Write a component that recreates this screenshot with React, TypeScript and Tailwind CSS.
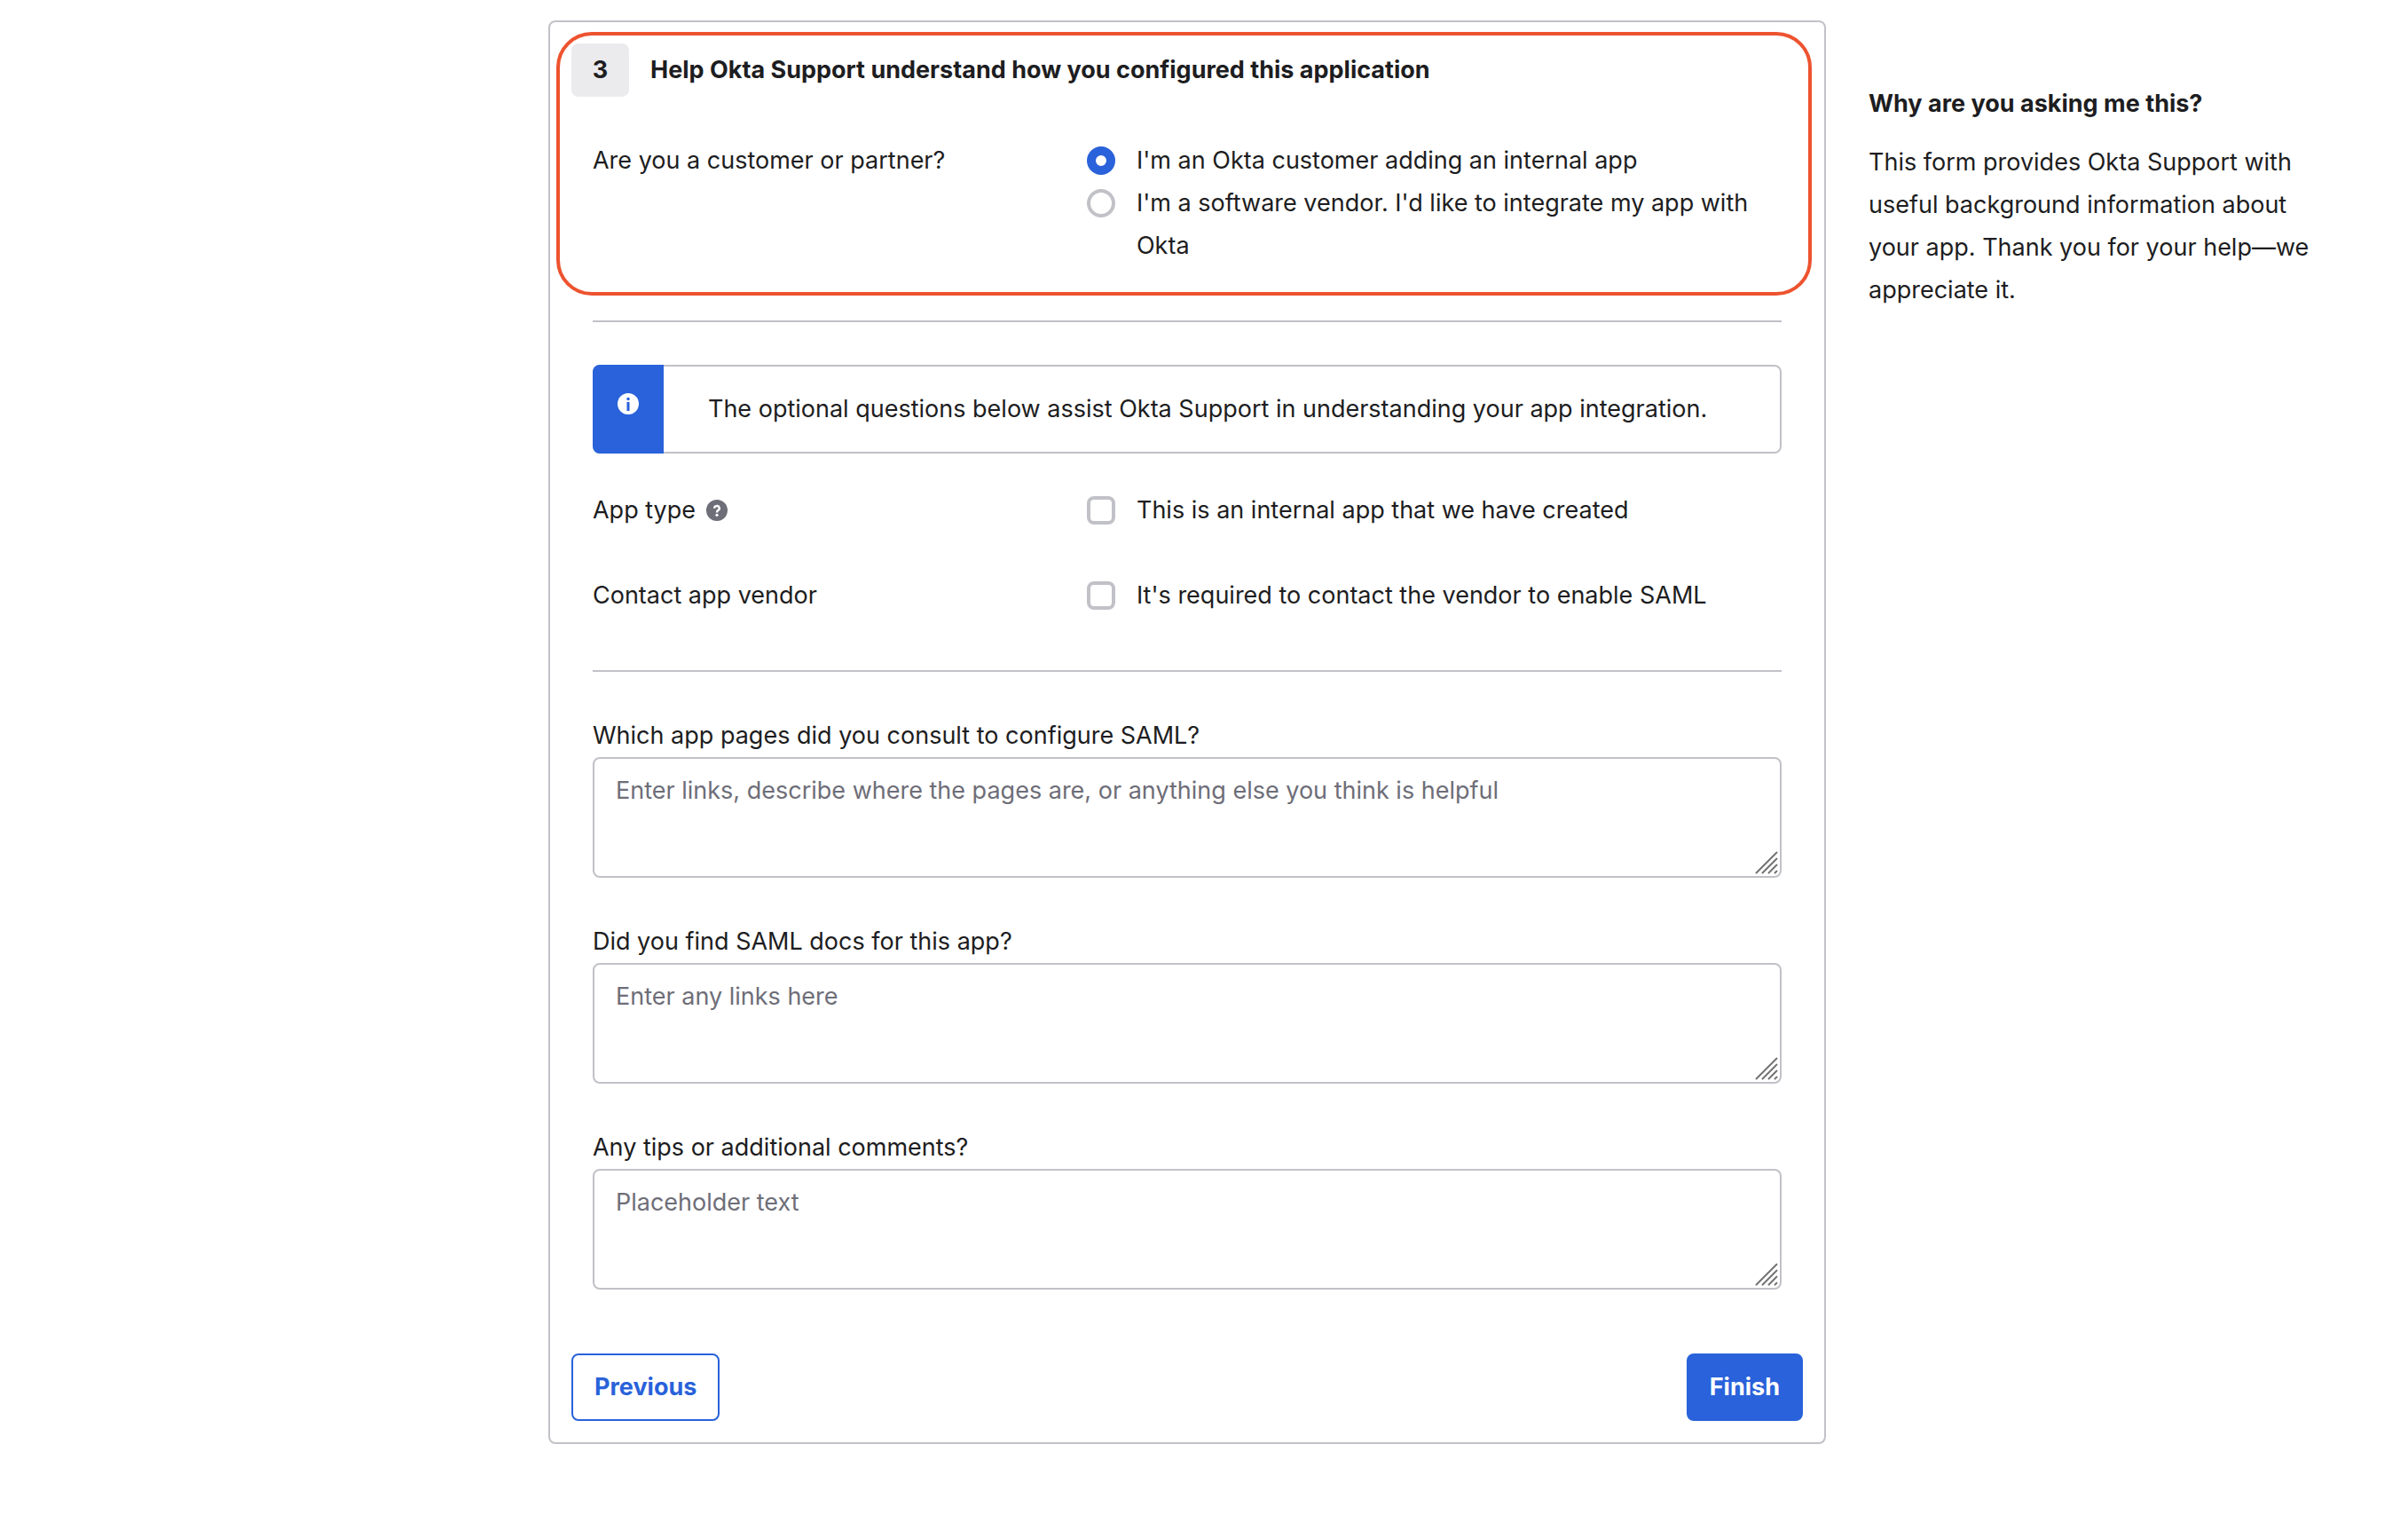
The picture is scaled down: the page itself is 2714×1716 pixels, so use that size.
import { useId } from 'react';

function InfoIcon() {
  return (
    <svg viewBox="0 0 24 24" className="size-6" aria-hidden="true">
      <circle cx="12" cy="12" r="12" fill="#fff" />
      <circle cx="12" cy="6.5" r="1.75" fill="#2962da" />
      <rect x="10.5" y="10" width="3" height="10" fill="#2962da" />
    </svg>
  );
}

function HelpIcon() {
  return (
    <svg viewBox="0 0 24 24" className="size-6" aria-hidden="true">
      <circle cx="12" cy="12" r="12" fill="#6e6e78" />
      <path
        d="M9.2 9.8a2.8 2.6 0 1 1 4.2 2.1c-1 .6-1.4 1-1.4 2.5"
        fill="none"
        stroke="#fff"
        strokeWidth="2.4"
      />
      <circle cx="12" cy="17.3" r="1.6" fill="#fff" />
    </svg>
  );
}

function ResizeGrip() {
  return (
    <svg
      viewBox="0 0 26 26"
      className="pointer-events-none absolute right-1 bottom-1 size-[26px]"
      fill="none"
      stroke="#737373"
      strokeWidth="2"
      strokeLinecap="round"
      aria-hidden="true"
    >
      <path d="M1.5 24.5 24.5 1.5M8.5 24.5 24.5 8.5M15.5 24.5 24.5 15.5M22.5 24.5 24.5 22.5" />
    </svg>
  );
}

function Option({
  type,
  label,
  name,
  checked,
}: {
  type: 'radio' | 'checkbox';
  label: string;
  name: string;
  checked?: boolean;
}) {
  return (
    <label className="flex items-start gap-6">
      <input
        type={type}
        name={name}
        defaultChecked={checked}
        className={
          type === 'radio'
            ? 'my-2 size-8 shrink-0 appearance-none rounded-full border-4 border-[#c1c1c8] bg-white checked:border-[10px] checked:border-[#2962da]'
            : 'my-2 size-8 shrink-0 appearance-none rounded-lg border-4 border-[#c1c1c8] bg-white checked:border-[#2962da] checked:bg-[#2962da]'
        }
      />
      <span>{label}</span>
    </label>
  );
}

function TextField({ label, placeholder }: { label: string; placeholder: string }) {
  const id = useId();
  return (
    <div>
      <label htmlFor={id} className="block">
        {label}
      </label>
      <div className="relative">
        <textarea
          id={id}
          placeholder={placeholder}
          className="block h-[136px] w-full resize-none rounded-lg border-2 border-[#c1c1c8] bg-white px-6 py-3 placeholder:text-[#6e6e78]"
        />
        <ResizeGrip />
      </div>
    </div>
  );
}

export default function App() {
  return (
    <div className="grid min-h-screen grid-cols-[minmax(0,1440fr)_minmax(0,656fr)] items-start bg-white pt-[23px] pb-[89px] pl-[22.77%] font-['Inter','Liberation_Sans',sans-serif] text-[27px] leading-[48px] text-[#1d1d21]">
      <form className="rounded-lg border-2 border-[#c1c1c8] pb-6" onSubmit={(e) => e.preventDefault()}>
        <section className="relative px-6 pt-6 pb-9">
          <div className="flex items-center gap-6">
            <span className="flex h-[60px] w-[65px] shrink-0 items-center justify-center rounded-lg bg-[#ebebed] font-bold">
              3
            </span>
            <h1 className="font-bold">Help Okta Support understand how you configured this application</h1>
          </div>
          <fieldset className="mt-12 grid grid-cols-[557fr_783fr] px-6">
            <span>Are you a customer or partner?</span>
            <div>
              <Option type="radio" name="role" label="I'm an Okta customer adding an internal app" checked />
              <Option
                type="radio"
                name="role"
                label="I'm a software vendor. I'd like to integrate my app with Okta"
              />
            </div>
          </fieldset>
          <div className="pointer-events-none absolute top-[11px] right-[14px] bottom-1 left-[7px] rounded-[40px] border-4 border-[#ed532f]" />
        </section>

        <div className="px-12">
          <hr className="mt-6 border-t-2 border-[#c1c1c8]" />

          <div role="note" className="mt-12 flex rounded-lg border-2 border-[#c1c1c8]">
            <div className="-my-0.5 -ml-0.5 flex w-20 shrink-0 justify-center rounded-l-lg bg-[#2962da] pt-8">
              <InfoIcon />
            </div>
            <p className="px-[50px] py-6">
              The optional questions below assist Okta Support in understanding your app integration.
            </p>
          </div>

          <div className="mt-10 grid grid-cols-[557fr_783fr] gap-y-12">
            <div className="flex items-center gap-3">
              App type
              <button type="button" aria-label="About app type">
                <HelpIcon />
              </button>
            </div>
            <Option type="checkbox" name="internal" label="This is an internal app that we have created" />
            <span>Contact app vendor</span>
            <Option type="checkbox" name="contact" label="It's required to contact the vendor to enable SAML" />
          </div>

          <hr className="mt-[60px] border-t-2 border-[#c1c1c8]" />

          <div className="mt-12 flex flex-col gap-12">
            <TextField
              label="Which app pages did you consult to configure SAML?"
              placeholder="Enter links, describe where the pages are, or anything else you think is helpful"
            />
            <TextField label="Did you find SAML docs for this app?" placeholder="Enter any links here" />
            <TextField label="Any tips or additional comments?" placeholder="Placeholder text" />
          </div>
        </div>

        <div className="mt-[72px] flex justify-between px-6">
          <button
            type="button"
            className="rounded-lg border-2 border-[#2962da] px-6 py-3 font-bold text-[#2962da]"
          >
            Previous
          </button>
          <button
            type="submit"
            className="rounded-lg border-2 border-[#2962da] bg-[#2962da] px-6 py-3 font-bold text-white"
          >
            Finish
          </button>
        </div>
      </form>

      <aside className="pt-[70px] pr-[100px] pl-12">
        <h2 className="font-bold">Why are you asking me this?</h2>
        <p className="mt-[18px]">
          This form provides Okta Support with useful background information about your app. Thank you for your
          help—we appreciate it.
        </p>
      </aside>
    </div>
  );
}
